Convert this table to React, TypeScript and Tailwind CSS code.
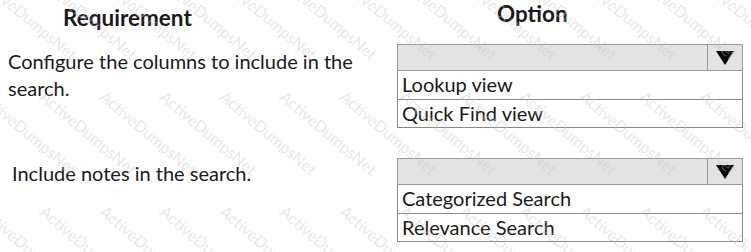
const font = { fontFamily: "Lato, 'Open Sans', sans-serif" };

type DropdownProps = {
  options: string[];
};

function Dropdown({ options }: DropdownProps) {
  return (
    <div className="w-[346px]">
      <div className="flex h-[27px] border border-[#9a9a9a] bg-[#e3e3e3]">
        <div className="flex-1" />
        <div className="flex w-[35px] items-center justify-center border-l border-[#9a9a9a]">
          <svg width="20" height="16" viewBox="0 0 20 16">
            <polygon points="1,1 19,1 10,15" fill="#000" />
          </svg>
        </div>
      </div>
      <div className="border border-t-0 border-[#8a8a8a]">
        {options.map((o, i) => (
          <div
            key={o}
            className={`h-[28px] pl-[4px] text-[20px] leading-[26px] text-[#1a1a1a] ${i > 0 ? "border-t border-[#8a8a8a]" : ""}`}
          >
            {o}
          </div>
        ))}
      </div>
    </div>
  );
}

// faint diagonal watermark, tiled like the source image
const marks: { x: number; y: number }[] = [];
for (let r = 0; r < 3; r++) {
  for (let c = 0; c < 14; c++) {
    marks.push({ x: -10 + c * 60, y: -30 + r * 115 });
  }
}

export default function App() {
  return (
    <main className="relative h-[252px] w-[751px] overflow-hidden bg-white" style={font}>
      <div className="flex">
        <section className="w-[397px]">
          <h2 className="pl-[63px] pt-[4px] text-[22.5px] font-bold leading-[28px] text-[#1a1a1a]">
            Requirement
          </h2>
          <p className="mt-[16px] pl-[8px] text-[20px] leading-[27px] text-[#1a1a1a]">
            Configure the columns to include in the
            <br />
            search.
          </p>
          <p className="mt-[58px] pl-[12px] text-[20px] leading-[27px] text-[#1a1a1a]">
            Include notes in the search.
          </p>
        </section>
        <section className="w-[346px]">
          <h2 className="h-[44px] pl-[100px] text-[22.5px] font-bold leading-[28px] text-[#1a1a1a]">
            Option
          </h2>
          <Dropdown options={["Lookup view", "Quick Find view"]} />
          <div className="h-[30px]" />
          <Dropdown options={["Categorized Search", "Relevance Search"]} />
        </section>
      </div>
      <div className="pointer-events-none absolute inset-0">
        {marks.map((m, i) => (
          <span
            key={i}
            className="absolute origin-top-left rotate-[40deg] whitespace-nowrap text-[16px] text-[#c8c8c8] opacity-40"
            style={{ left: m.x, top: m.y }}
          >
            ActiveDumpsNet
          </span>
        ))}
      </div>
    </main>
  );
}
